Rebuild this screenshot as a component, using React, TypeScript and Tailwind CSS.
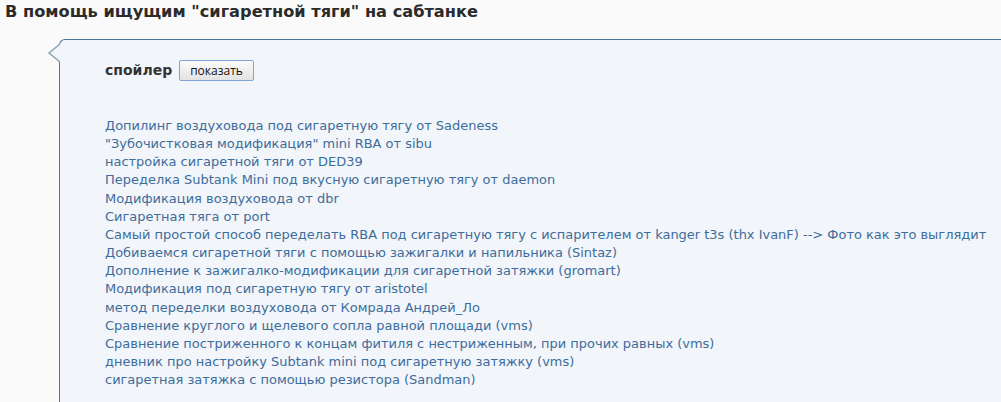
const topics = [
  'Допилинг воздуховода под сигаретную тягу от Sadeness',
  '"Зубочистковая модификация" mini RBA от sibu',
  'настройка сигаретной тяги от DED39',
  'Переделка Subtank Mini под вкусную сигаретную тягу от daemon',
  'Модификация воздуховода от dbr',
  'Сигаретная тяга от port',
  'Самый простой способ переделать RBA под сигаретную тягу с испарителем от kanger t3s (thx IvanF) --> Фото как это выглядит',
  'Добиваемся сигаретной тяги с помощью зажигалки и напильника (Sintaz)',
  'Дополнение к зажигалко-модификации для сигаретной затяжки (gromart)',
  'Модификация под сигаретную тягу от aristotel',
  'метод переделки воздуховода от Комрада Андрей_Ло',
  'Сравнение круглого и щелевого сопла равной площади (vms)',
  'Сравнение постриженного к концам фитиля с нестриженным, при прочих равных (vms)',
  'дневник про настройку Subtank mini под сигаретную затяжку (vms)',
  'сигаретная затяжка с помощью резистора (Sandman)',
];

export default function App() {
  return (
    <div className="h-[402px] w-[1001px] overflow-hidden bg-[#fafafa] font-['DejaVu_Sans',sans-serif]">
      <h1 className="px-[5px] pt-[1px] text-[16.2px] font-bold leading-[21px] text-[#2b2b2b]">
        В помощь ищущим "сигаретной тяги" на сабтанке
      </h1>

      <div className="flex pl-[47px] pt-[17px]">
        {/* bubble pointer */}
        <svg width="13" height="20" viewBox="0 0 13 20" className="relative z-10 mt-[4px] -mr-px shrink-0">
          <path d="M13 1 L2 10 L13 19" fill="#f2f5f9" stroke="#8ea7bb" strokeWidth="1.6" />
        </svg>

        <div className="h-[400px] flex-1 rounded-tl-[6px] border-l border-t border-[#4b7596] bg-[#f2f5f9] pl-[45px] pt-[20px]">
          <div className="flex items-center gap-[7px]">
            <span className="text-[14px] font-bold text-[#333]">спойлер</span>
            <button className="h-[21px] rounded-[2px] border border-[#7fa5d6] bg-gradient-to-b from-[#fbfbfb] to-[#e3e3e3] px-[10px] font-['Open_Sans',sans-serif] text-[12px] leading-[18px] text-[#111]">
              показать
            </button>
          </div>

          <ul className="mt-[36px] text-[12.97px] leading-[18.15px] text-[#3d6d9c]">
            {topics.map((t) => (
              <li key={t} className="whitespace-nowrap">{t}</li>
            ))}
          </ul>
        </div>
      </div>
    </div>
  );
}
